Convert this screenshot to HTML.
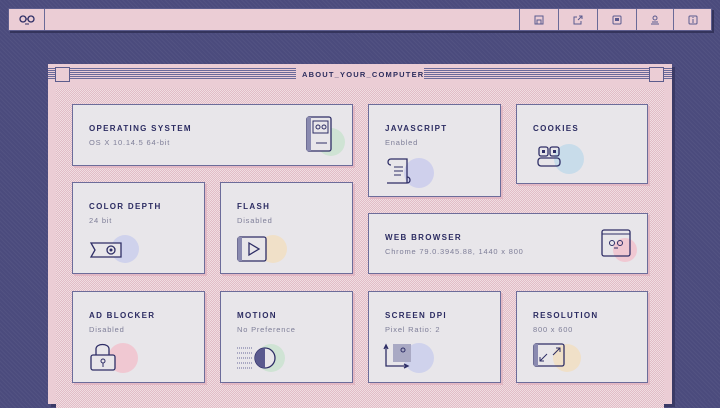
<!DOCTYPE html>
<html><head><style>
*{margin:0;padding:0;box-sizing:border-box}
body{width:720px;height:400px;overflow:hidden;background:#4b4b7d;background-image:repeating-linear-gradient(45deg,rgba(255,255,255,.04) 0 1px,transparent 1px 3px);font-family:"Liberation Sans",sans-serif;position:relative}
.bar{position:absolute;left:8px;top:8px;width:704px;height:23px;background:#ebcdd5;border:1px solid #5c5c8c;box-shadow:2px 2px 0 #34345c}
.cell{position:absolute;top:0;height:21px;border-left:1px solid #6a6a98;display:flex;align-items:center;justify-content:center}
.win{position:absolute;left:48px;top:64px;width:624px;height:340px;background:#ebcdd5;box-shadow:3px 3px 0 #3a3a66}
.tb{position:absolute;left:0;top:0;width:624px;height:20px}
.lines{position:absolute;top:4px;height:11px;background:repeating-linear-gradient(#6a6a9a 0 1px,transparent 1px 2px)}
.sq{position:absolute;top:3px;width:15px;height:15px;background:#ebcdd5;border:1px solid #5c5c8c}
.ttl{position:absolute;left:254px;top:6px;font-size:7.5px;font-weight:bold;letter-spacing:1.2px;color:#2e2e5e}
.content{position:absolute;left:8px;top:24px;width:608px;height:320px;background-color:#f0dde2;background-image:repeating-conic-gradient(#e2bcc6 0 25%,transparent 0 50%);background-size:2px 2px}
.card{position:absolute;background:#e8e6ea;border:1px solid #6c6c9a;box-shadow:2px 2px 0 #e2b8c4}
.card h3{position:absolute;left:16px;top:19px;font-size:8px;font-weight:bold;letter-spacing:1.3px;color:#2c2c62}
.card p{position:absolute;left:16px;top:33px;font-size:7.5px;letter-spacing:.8px;color:#7e7e98}
.ic{position:absolute}
</style></head><body>
<div class="bar">
 <div class="cell" style="left:0;width:36px;border-left:none;border-right:1px solid #6a6a98"><svg width="16" height="10"><circle cx="4" cy="4" r="3" fill="none" stroke="#2e2e66" stroke-width="1.3"/><circle cx="12" cy="4" r="3" fill="none" stroke="#2e2e66" stroke-width="1.3"/><line x1="7" y1="4" x2="9" y2="4" stroke="#2e2e66"/><line x1="6" y1="9" x2="10" y2="9" stroke="#2e2e66"/></svg></div>
 <div class="cell" style="left:510px;width:39px"><svg width="10" height="10"><rect x="1" y="1" width="8" height="8" fill="none" stroke="#5a5a8e"/><rect x="3" y="5" width="4" height="4" fill="none" stroke="#5a5a8e"/></svg></div>
 <div class="cell" style="left:549px;width:39px"><svg width="10" height="10"><path d="M4 2H1V9H8V6M5 5L9 1M6 1H9V4" fill="none" stroke="#5a5a8e"/></svg></div>
 <div class="cell" style="left:588px;width:39px"><svg width="10" height="10"><rect x="1" y="1" width="8" height="8" rx="1" fill="none" stroke="#5a5a8e"/><rect x="3" y="3" width="4" height="3" fill="#5a5a8e"/></svg></div>
 <div class="cell" style="left:627px;width:37px"><svg width="10" height="10"><circle cx="5" cy="3" r="2" fill="none" stroke="#5a5a8e"/><path d="M2 7H8M1 9H9" stroke="#5a5a8e"/></svg></div>
 <div class="cell" style="left:664px;width:39px"><svg width="10" height="10"><rect x="1" y="1" width="8" height="8" rx="1" fill="none" stroke="#5a5a8e"/><path d="M5 4V8M5 2V3" stroke="#5a5a8e"/></svg></div>
</div>
<div class="win">
 <div class="tb">
  <div class="lines" style="left:0;width:248px"></div>
  <div class="lines" style="left:376px;width:248px"></div>
  <div class="sq" style="left:7px"></div>
  <div class="sq" style="left:601px"></div>
  <div class="ttl">ABOUT_YOUR_COMPUTER</div>
 </div>
 <div class="content"></div>
</div>

<div class="card" style="left:72px;top:104px;width:281px;height:62px"><h3>OPERATING SYSTEM</h3><p>OS X 10.14.5 64-bit</p>
 <svg class="ic" style="left:230px;top:10px" width="44" height="44"><circle cx="28" cy="27" r="14" fill="#cfe3d4"/><rect x="4" y="2" width="24" height="34" rx="2" fill="#e8e6ea" stroke="#2e2e66" stroke-width="1.3"/><rect x="4" y="2" width="4" height="34" fill="#8a8ab0"/><rect x="10" y="6" width="15" height="12" fill="none" stroke="#2e2e66"/><circle cx="15" cy="12" r="2" fill="none" stroke="#2e2e66"/><circle cx="21" cy="12" r="2" fill="none" stroke="#2e2e66"/><line x1="13" y1="28" x2="24" y2="28" stroke="#2e2e66"/></svg></div>

<div class="card" style="left:368px;top:104px;width:133px;height:93px"><h3>JAVASCRIPT</h3><p>Enabled</p>
 <svg class="ic" style="left:14px;top:48px" width="56" height="40"><circle cx="36" cy="20" r="15" fill="#cfd0ec"/><path d="M8 6H24V30H4M8 6C4 6 4 12 8 12M24 30C28 30 28 24 24 24" fill="none" stroke="#2e2e66" stroke-width="1.3"/><path d="M11 14H20M11 18H20M11 22H18" stroke="#2e2e66"/></svg></div>

<div class="card" style="left:516px;top:104px;width:132px;height:80px"><h3>COOKIES</h3><p></p>
 <svg class="ic" style="left:18px;top:36px" width="50" height="40"><circle cx="34" cy="18" r="15" fill="#c8dcea"/><rect x="4" y="6" width="9" height="9" rx="2" fill="none" stroke="#2e2e66" stroke-width="1.3"/><rect x="15" y="6" width="9" height="9" rx="2" fill="none" stroke="#2e2e66" stroke-width="1.3"/><rect x="7" y="9" width="3" height="3" fill="#2e2e66"/><rect x="18" y="9" width="3" height="3" fill="#2e2e66"/><rect x="3" y="17" width="22" height="8" rx="3" fill="none" stroke="#2e2e66" stroke-width="1.3"/></svg></div>

<div class="card" style="left:72px;top:182px;width:133px;height:92px"><h3>COLOR DEPTH</h3><p>24 bit</p>
 <svg class="ic" style="left:14px;top:48px" width="56" height="40"><circle cx="38" cy="18" r="14" fill="#cfd2ec"/><path d="M4 12H34V26H4L8 19Z" fill="#e8e6ea" stroke="#2e2e66" stroke-width="1.3"/><circle cx="24" cy="19" r="4" fill="none" stroke="#2e2e66" stroke-width="1.3"/><circle cx="24" cy="19" r="1.5" fill="#2e2e66"/></svg></div>

<div class="card" style="left:220px;top:182px;width:133px;height:92px"><h3>FLASH</h3><p>Disabled</p>
 <svg class="ic" style="left:14px;top:48px" width="56" height="40"><circle cx="38" cy="18" r="14" fill="#f0e0c8"/><rect x="3" y="6" width="28" height="24" rx="2" fill="#e8e6ea" stroke="#2e2e66" stroke-width="1.3"/><rect x="3" y="6" width="4" height="24" fill="#8a8ab0"/><path d="M14 12L24 18L14 24Z" fill="none" stroke="#2e2e66" stroke-width="1.3"/></svg></div>

<div class="card" style="left:368px;top:213px;width:280px;height:61px"><h3>WEB BROWSER</h3><p>Chrome 79.0.3945.88, 1440 x 800</p>
 <svg class="ic" style="left:230px;top:12px" width="44" height="44"><circle cx="26" cy="24" r="12" fill="#f0c8d2"/><rect x="3" y="4" width="28" height="26" rx="2" fill="none" stroke="#2e2e66" stroke-width="1.3"/><line x1="3" y1="8" x2="31" y2="8" stroke="#2e2e66"/><circle cx="13" cy="17" r="2.5" fill="none" stroke="#2e2e66"/><circle cx="21" cy="17" r="2.5" fill="none" stroke="#2e2e66"/><line x1="15" y1="22" x2="19" y2="22" stroke="#2e2e66"/></svg></div>

<div class="card" style="left:72px;top:291px;width:133px;height:92px"><h3>AD BLOCKER</h3><p>Disabled</p>
 <svg class="ic" style="left:14px;top:48px" width="56" height="40"><circle cx="36" cy="18" r="15" fill="#f0c8d2"/><path d="M9 15V9C9 3 22 3 22 9V15" fill="none" stroke="#2e2e66" stroke-width="1.3"/><rect x="4" y="15" width="24" height="15" rx="2" fill="#e8e6ea" stroke="#2e2e66" stroke-width="1.3"/><circle cx="16" cy="21" r="2" fill="none" stroke="#2e2e66"/><line x1="16" y1="23" x2="16" y2="27" stroke="#2e2e66"/></svg></div>

<div class="card" style="left:220px;top:291px;width:133px;height:92px"><h3>MOTION</h3><p>No Preference</p>
 <svg class="ic" style="left:14px;top:48px" width="56" height="40"><circle cx="36" cy="18" r="14" fill="#cfe3d4"/><path d="M2 8H18M2 13H18M2 18H18M2 23H18M2 28H18" stroke="#6a6a9a" stroke-dasharray="1 1"/><circle cx="30" cy="18" r="10" fill="#e8e6ea" stroke="#2e2e66" stroke-width="1.3"/><path d="M30 8A10 10 0 0 0 30 28Z" fill="#5a5a8e"/></svg></div>

<div class="card" style="left:368px;top:291px;width:133px;height:92px"><h3>SCREEN DPI</h3><p>Pixel Ratio: 2</p>
 <svg class="ic" style="left:14px;top:48px" width="56" height="40"><circle cx="36" cy="18" r="15" fill="#cfd2ec"/><rect x="10" y="4" width="18" height="18" fill="#a9a9c4"/><circle cx="20" cy="10" r="2" fill="none" stroke="#2e2e66"/><path d="M3 6V26H24M1 9L3 5L5 9M21 24L25 26L21 28" fill="none" stroke="#2e2e66" stroke-width="1.3"/></svg></div>

<div class="card" style="left:516px;top:291px;width:132px;height:92px"><h3>RESOLUTION</h3><p>800 x 600</p>
 <svg class="ic" style="left:14px;top:48px" width="56" height="40"><circle cx="36" cy="18" r="14" fill="#f0e0c8"/><rect x="3" y="4" width="30" height="22" rx="2" fill="none" stroke="#2e2e66" stroke-width="1.3"/><rect x="3" y="4" width="4" height="22" fill="#8a8ab0"/><path d="M22 15L29 8M25 8H29V12M16 14L9 21M9 17V21H13" fill="none" stroke="#2e2e66"/></svg></div>
</body></html>
